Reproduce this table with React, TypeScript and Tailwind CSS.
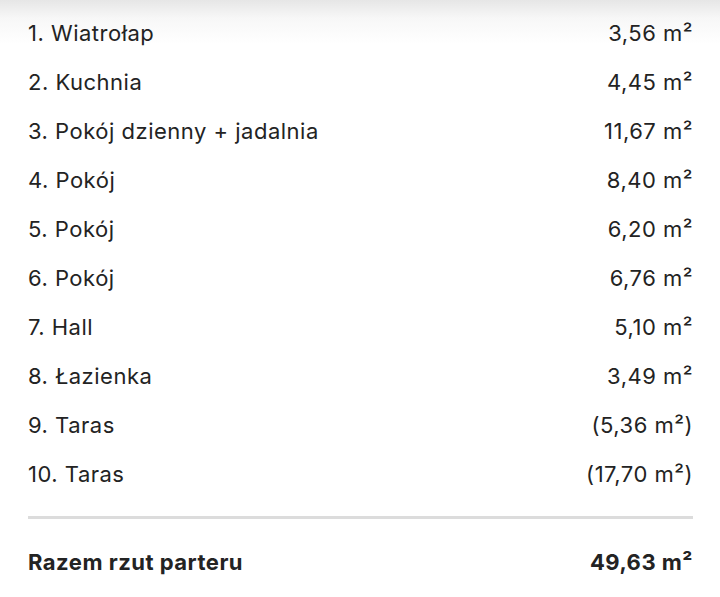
import React from 'react';

const rooms = [
  { name: '1. Wiatrołap', area: '3,56 m²' },
  { name: '2. Kuchnia', area: '4,45 m²' },
  { name: '3. Pokój dzienny + jadalnia', area: '11,67 m²' },
  { name: '4. Pokój', area: '8,40 m²' },
  { name: '5. Pokój', area: '6,20 m²' },
  { name: '6. Pokój', area: '6,76 m²' },
  { name: '7. Hall', area: '5,10 m²' },
  { name: '8. Łazienka', area: '3,49 m²' },
  { name: '9. Taras', area: '(5,36 m²)' },
  { name: '10. Taras', area: '(17,70 m²)' },
];

export default function App() {
  return (
    <div
      className="min-h-[597px] w-[720px] bg-[linear-gradient(to_bottom,#e6e6e6_0px,#f7f7f7_18px,#ffffff_44px)] pl-[28px] pr-[27px] pt-[8px] text-[#232323] tracking-[0.5px]"
      style={{ fontFamily: 'Inter, "Open Sans", sans-serif' }}
    >
      {/* Room list */}
      <ul>
        {rooms.map((room) => (
          <li
            key={room.name}
            className="flex h-[49px] items-center justify-between pt-[2px] text-[22px]"
          >
            <span>{room.name}</span>
            <span>{room.area}</span>
          </li>
        ))}
      </ul>

      <div className="mt-[18px] h-[3px] bg-[#dcdcdc]" />

      {/* Total */}
      <div className="mt-[18px] flex h-[49px] items-center justify-between pt-[2px] text-[22px] font-bold">
        <span>Razem rzut parteru</span>
        <span>49,63 m²</span>
      </div>
    </div>
  );
}
